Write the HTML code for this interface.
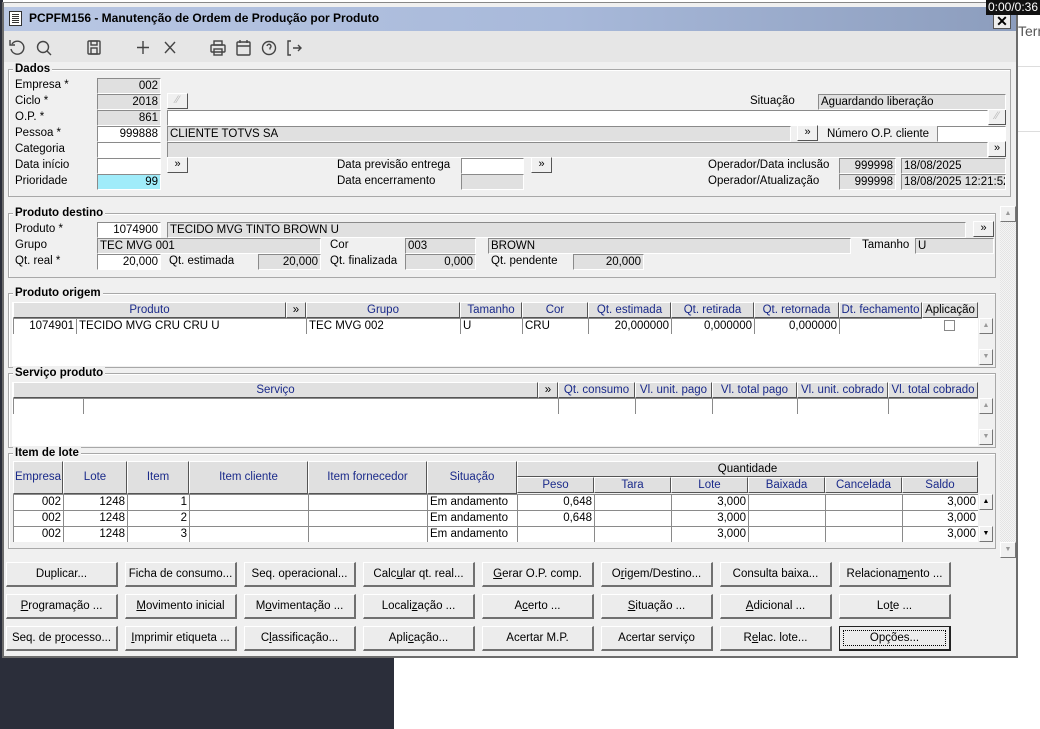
<!DOCTYPE html>
<html><head><meta charset="utf-8"><style>
*{box-sizing:border-box;margin:0;padding:0}
body{width:1040px;height:729px;position:relative;overflow:hidden;background:#fff;font-family:"Liberation Sans",Arial,sans-serif;font-size:11.5px;color:#000}
div,span{position:absolute}
.l{white-space:nowrap;line-height:14px}
.f{height:16px;line-height:14px;padding:0 2px;white-space:nowrap;overflow:hidden;border-top:1px solid #8a8a8a;border-left:1px solid #8a8a8a;border-bottom:1px solid #fff;border-right:1px solid #fff}
.w{background:#fff}.g{background:#e0e0e0}.r{text-align:right}
.b{height:16px;background:#f0f0f0;border:1px solid #fff;border-right-color:#555;border-bottom-color:#555;text-align:center;line-height:13px;font-size:11px}
.fs{border:1px solid #a8a8a8;box-shadow:inset 1px 1px 0 #fff}
.lg{font-weight:bold;background:#f0f0f0;padding:0 2px;line-height:14px}
.h{height:16px;background:#e0e0e0;border:1px solid #fff;border-right-color:#555;border-bottom-color:#555;text-align:center;color:#1a2a8a;line-height:14px;white-space:nowrap;overflow:hidden}
.c{height:16px;background:#fff;border-left:1px solid #8a8a8a;border-top:1px solid #8a8a8a;line-height:14px;padding:0 2px;white-space:nowrap;overflow:hidden}
.bt{height:25px;width:112px;background:#ececec;border:1px solid #fff;border-right:2px solid #707070;border-bottom:2px solid #707070;text-align:center;line-height:22px;white-space:nowrap}
.sb{width:14px;height:16px;background:#f0f0f0;border:1px solid #fff;border-right-color:#777;border-bottom-color:#777;font-size:7px;text-align:center;line-height:13px;color:#999}
</style></head><body>
<div style="left:0;top:0;width:3px;height:729px;background:#2b2e3a"></div>
<div style="left:0;top:657px;width:394px;height:72px;background:#2b2e3a"></div>
<div class="l" style="left:1018px;top:24px;font-size:14px;color:#555">Terr</div>
<div style="left:1017px;top:66px;width:23px;height:1px;background:#ddd"></div>
<div style="left:1017px;top:131px;width:23px;height:1px;background:#ddd"></div>
<div style="left:2px;top:2px;width:1016px;height:656px;background:#f0f0f0;border:2px solid #6c6c6c;border-top:1px solid #888"></div>
<div style="left:4px;top:7px;width:1012px;height:24px;background:linear-gradient(90deg,#b9c7e3,#a8b9da 55%,#8c9dbd)"></div>
<div style="left:9px;top:11px;width:13px;height:15px;background:#fff;border:1px solid #333"><div style="left:2px;top:2px;width:7px;height:9px;background:repeating-linear-gradient(#333 0 1px,#fff 1px 2px)"></div></div>
<div class="l" style="left:29px;top:11px;font-weight:bold;font-size:12px">PCPFM156 - Manutenção de Ordem de Produção por Produto</div>
<div style="left:993px;top:14px;width:18px;height:15px;background:#eee;border:1px solid #555;text-align:center;font-weight:bold;line-height:13px;font-size:14px">✕</div>
<div class="l" style="left:986px;top:0;width:54px;height:15px;background:#111;color:#fff;font-size:12px;text-align:center">0:00/0:36</div>
<div style="left:4px;top:31px;width:1012px;height:31px;background:#e6e6e6"></div>
<svg style="position:absolute;left:8px;top:38px" width="300" height="20" fill="none" stroke="#444" stroke-width="1.4">
<path d="M4 6 A6.5 6.5 0 1 1 3 11"/><path d="M2 2 V7 H7"/>
<circle cx="35" cy="9" r="5.5"/><path d="M39 13 L43 17"/>
<rect x="80" y="3" width="12" height="13" rx="1"/><rect x="83" y="3" width="6" height="4"/><rect x="83" y="10" width="6" height="6"/>
<path d="M135 3 V16 M129 9.5 H141"/><path d="M157 4 L167 15 M167 4 L157 15"/>
<rect x="203" y="7" width="14" height="7" rx="1"/><rect x="206" y="3" width="8" height="4"/><rect x="206" y="11" width="8" height="6"/>
<rect x="229" y="4" width="13" height="13" rx="1"/><path d="M229 8 H242 M232 2 V5 M239 2 V5"/>
<circle cx="261" cy="10" r="6.5"/><path d="M259 8 a2 2 0 1 1 3 2 v1.5"/>
<path d="M283 3 H280 V17 H283 M285 10 H293 M290 7 L293 10 L290 13"/>
</svg>
<!-- Dados -->
<div class="fs" style="left:8px;top:69px;width:1003px;height:128px"></div>
<div class="lg" style="left:13px;top:62px">Dados</div>
<div class="l" style="left:15px;top:78px">Empresa *</div>
<div class="l" style="left:15px;top:94px">Ciclo *</div>
<div class="l" style="left:15px;top:110px">O.P. *</div>
<div class="l" style="left:15px;top:126px">Pessoa *</div>
<div class="l" style="left:15px;top:142px">Categoria</div>
<div class="l" style="left:15px;top:158px">Data início</div>
<div class="l" style="left:15px;top:174px">Prioridade</div>
<div class="f g r" style="left:97px;top:78px;width:64px">002</div>
<div class="f g r" style="left:97px;top:94px;width:64px">2018</div>
<div class="f g r" style="left:97px;top:110px;width:64px">861</div>
<div class="f w r" style="left:97px;top:126px;width:64px">999888</div>
<div class="f w" style="left:97px;top:142px;width:64px"></div>
<div class="f w" style="left:97px;top:158px;width:64px"></div>
<div class="f r" style="left:97px;top:174px;width:64px;background:#a0ecfa">99</div>
<div class="b" style="left:167px;top:93px;width:21px;color:#bbb">⁄⁄</div>
<div class="f w" style="left:167px;top:110px;width:821px"></div>
<div class="b" style="left:988px;top:109px;width:18px;color:#bbb">⁄⁄</div>
<div class="f g" style="left:167px;top:126px;width:624px">CLIENTE TOTVS SA</div>
<div class="b" style="left:797px;top:125px;width:21px">»</div>
<div class="l" style="left:827px;top:127px">Número O.P. cliente</div>
<div class="f w" style="left:937px;top:126px;width:69px"></div>
<div class="f g" style="left:167px;top:142px;width:821px"></div>
<div class="b" style="left:988px;top:141px;width:18px">»</div>
<div class="b" style="left:167px;top:157px;width:21px">»</div>
<div class="l" style="left:337px;top:158px">Data previsão entrega</div>
<div class="l" style="left:337px;top:174px">Data encerramento</div>
<div class="f w" style="left:461px;top:158px;width:63px"></div>
<div class="f g" style="left:461px;top:174px;width:63px"></div>
<div class="b" style="left:531px;top:157px;width:21px">»</div>
<div class="l" style="left:750px;top:94px">Situação</div>
<div class="f g" style="left:818px;top:94px;width:188px">Aguardando liberação</div>
<div class="l" style="left:708px;top:158px">Operador/Data inclusão</div>
<div class="l" style="left:708px;top:174px">Operador/Atualização</div>
<div class="f g r" style="left:839px;top:158px;width:57px">999998</div>
<div class="f g r" style="left:839px;top:174px;width:57px">999998</div>
<div class="f g" style="left:901px;top:158px;width:105px">18/08/2025</div>
<div class="f g" style="left:901px;top:174px;width:105px">18/08/2025 12:21:52</div>
<!-- scrollbar -->
<div style="left:1000px;top:206px;width:16px;height:352px;background:repeating-conic-gradient(#f4f4f4 0 25%,#e4e4e4 0 50%) 0 0/2px 2px"></div>
<div class="sb" style="left:1000px;top:206px;width:16px">▲</div>
<div class="sb" style="left:1000px;top:542px;width:16px">▼</div>
<!-- Produto destino -->
<div class="fs" style="left:8px;top:213px;width:988px;height:65px"></div>
<div class="lg" style="left:13px;top:206px">Produto destino</div>
<div class="l" style="left:15px;top:222px">Produto *</div>
<div class="l" style="left:15px;top:238px">Grupo</div>
<div class="l" style="left:15px;top:254px">Qt. real *</div>
<div class="f w r" style="left:97px;top:222px;width:64px">1074900</div>
<div class="f g" style="left:167px;top:222px;width:799px">TECIDO MVG TINTO BROWN U</div>
<div class="b" style="left:973px;top:221px;width:21px">»</div>
<div class="f g" style="left:97px;top:238px;width:224px">TEC MVG 001</div>
<div class="l" style="left:330px;top:238px">Cor</div>
<div class="f g" style="left:405px;top:238px;width:71px">003</div>
<div class="f g" style="left:488px;top:238px;width:363px">BROWN</div>
<div class="l" style="left:862px;top:238px">Tamanho</div>
<div class="f g" style="left:915px;top:238px;width:79px">U</div>
<div class="f w r" style="left:97px;top:254px;width:64px">20,000</div>
<div class="l" style="left:169px;top:254px">Qt. estimada</div>
<div class="f g r" style="left:258px;top:254px;width:63px">20,000</div>
<div class="l" style="left:330px;top:254px">Qt. finalizada</div>
<div class="f g r" style="left:405px;top:254px;width:71px">0,000</div>
<div class="l" style="left:491px;top:254px">Qt. pendente</div>
<div class="f g r" style="left:573px;top:254px;width:71px">20,000</div>
<!-- Produto origem -->
<div class="fs" style="left:8px;top:293px;width:988px;height:75px"></div>
<div style="left:12px;top:302px;width:966px;height:64px;background:#fff"></div>
<div class="lg" style="left:13px;top:286px">Produto origem</div>
<div class="h" style="left:13px;top:302px;width:273px">Produto</div>
<div class="h" style="left:286px;top:302px;width:20px;color:#000">»</div>
<div class="h" style="left:306px;top:302px;width:154px">Grupo</div>
<div class="h" style="left:460px;top:302px;width:62px">Tamanho</div>
<div class="h" style="left:522px;top:302px;width:66px">Cor</div>
<div class="h" style="left:588px;top:302px;width:83px">Qt. estimada</div>
<div class="h" style="left:671px;top:302px;width:83px">Qt. retirada</div>
<div class="h" style="left:754px;top:302px;width:85px">Qt. retornada</div>
<div class="h" style="left:839px;top:302px;width:83px">Dt. fechamento</div>
<div class="h" style="left:922px;top:302px;width:56px;color:#000">Aplicação</div>
<div class="c r" style="left:13px;top:318px;width:63px">1074901</div>
<div class="c" style="left:76px;top:318px;width:230px">TECIDO MVG CRU CRU U</div>
<div class="c" style="left:306px;top:318px;width:154px">TEC MVG 002</div>
<div class="c" style="left:460px;top:318px;width:62px">U</div>
<div class="c" style="left:522px;top:318px;width:66px">CRU</div>
<div class="c r" style="left:588px;top:318px;width:83px">20,000000</div>
<div class="c r" style="left:671px;top:318px;width:83px">0,000000</div>
<div class="c r" style="left:754px;top:318px;width:85px">0,000000</div>
<div class="c" style="left:839px;top:318px;width:83px"></div>
<div style="left:944px;top:320px;width:11px;height:11px;border:1px solid #888;background:#fff"></div>
<div class="sb" style="left:979px;top:318px">▲</div>
<div class="sb" style="left:979px;top:349px">▼</div>
<!-- Serviço -->
<div class="fs" style="left:8px;top:373px;width:988px;height:75px"></div>
<div style="left:12px;top:382px;width:966px;height:64px;background:#fff"></div>
<div class="lg" style="left:13px;top:366px">Serviço produto</div>
<div class="h" style="left:13px;top:382px;width:525px">Serviço</div>
<div class="h" style="left:538px;top:382px;width:20px;color:#000">»</div>
<div class="h" style="left:558px;top:382px;width:77px">Qt. consumo</div>
<div class="h" style="left:635px;top:382px;width:77px">Vl. unit. pago</div>
<div class="h" style="left:712px;top:382px;width:85px">Vl. total pago</div>
<div class="h" style="left:797px;top:382px;width:91px">Vl. unit. cobrado</div>
<div class="h" style="left:888px;top:382px;width:90px">Vl. total cobrado</div>
<div class="c" style="left:13px;top:398px;width:70px"></div>
<div class="c" style="left:83px;top:398px;width:475px"></div>
<div class="c" style="left:558px;top:398px;width:77px"></div>
<div class="c" style="left:635px;top:398px;width:77px"></div>
<div class="c" style="left:712px;top:398px;width:85px"></div>
<div class="c" style="left:797px;top:398px;width:91px"></div>
<div class="c" style="left:888px;top:398px;width:90px"></div>
<div class="sb" style="left:979px;top:398px">▲</div>
<div class="sb" style="left:979px;top:429px">▼</div>
<!-- Item de lote -->
<div class="fs" style="left:8px;top:453px;width:988px;height:96px"></div>
<div class="lg" style="left:13px;top:446px">Item de lote</div>
<div class="h" style="left:13px;top:461px;width:50px;height:33px;line-height:30px;color:#1a2a8a">Empresa</div>
<div class="h" style="left:63px;top:461px;width:64px;height:33px;line-height:30px">Lote</div>
<div class="h" style="left:127px;top:461px;width:62px;height:33px;line-height:30px">Item</div>
<div class="h" style="left:189px;top:461px;width:119px;height:33px;line-height:30px">Item cliente</div>
<div class="h" style="left:308px;top:461px;width:119px;height:33px;line-height:30px">Item fornecedor</div>
<div class="h" style="left:427px;top:461px;width:90px;height:33px;line-height:30px">Situação</div>
<div class="h" style="left:517px;top:461px;width:461px;color:#000">Quantidade</div>
<div class="h" style="left:517px;top:477px;width:77px">Peso</div>
<div class="h" style="left:594px;top:477px;width:77px">Tara</div>
<div class="h" style="left:671px;top:477px;width:77px">Lote</div>
<div class="h" style="left:748px;top:477px;width:77px">Baixada</div>
<div class="h" style="left:825px;top:477px;width:77px">Cancelada</div>
<div class="h" style="left:902px;top:477px;width:76px">Saldo</div>

<div class="c r" style="left:13px;top:494px;width:50px">002</div><div class="c r" style="left:63px;top:494px;width:64px">1248</div><div class="c r" style="left:127px;top:494px;width:62px">1</div><div class="c" style="left:189px;top:494px;width:119px"></div><div class="c" style="left:308px;top:494px;width:119px"></div><div class="c" style="left:427px;top:494px;width:90px">Em andamento</div><div class="c r" style="left:517px;top:494px;width:77px">0,648</div><div class="c" style="left:594px;top:494px;width:77px"></div><div class="c r" style="left:671px;top:494px;width:77px">3,000</div><div class="c" style="left:748px;top:494px;width:77px"></div><div class="c" style="left:825px;top:494px;width:77px"></div><div class="c r" style="left:902px;top:494px;width:76px">3,000</div>
<div class="c r" style="left:13px;top:510px;width:50px">002</div><div class="c r" style="left:63px;top:510px;width:64px">1248</div><div class="c r" style="left:127px;top:510px;width:62px">2</div><div class="c" style="left:189px;top:510px;width:119px"></div><div class="c" style="left:308px;top:510px;width:119px"></div><div class="c" style="left:427px;top:510px;width:90px">Em andamento</div><div class="c r" style="left:517px;top:510px;width:77px">0,648</div><div class="c" style="left:594px;top:510px;width:77px"></div><div class="c r" style="left:671px;top:510px;width:77px">3,000</div><div class="c" style="left:748px;top:510px;width:77px"></div><div class="c" style="left:825px;top:510px;width:77px"></div><div class="c r" style="left:902px;top:510px;width:76px">3,000</div>
<div class="c r" style="left:13px;top:526px;width:50px">002</div><div class="c r" style="left:63px;top:526px;width:64px">1248</div><div class="c r" style="left:127px;top:526px;width:62px">3</div><div class="c" style="left:189px;top:526px;width:119px"></div><div class="c" style="left:308px;top:526px;width:119px"></div><div class="c" style="left:427px;top:526px;width:90px">Em andamento</div><div class="c r" style="left:517px;top:526px;width:77px"></div><div class="c" style="left:594px;top:526px;width:77px"></div><div class="c r" style="left:671px;top:526px;width:77px">3,000</div><div class="c" style="left:748px;top:526px;width:77px"></div><div class="c" style="left:825px;top:526px;width:77px"></div><div class="c r" style="left:902px;top:526px;width:76px">3,000</div>
<div class="sb" style="left:979px;top:494px;color:#000">▲</div>
<div class="sb" style="left:979px;top:526px;color:#000">▼</div>
<!-- buttons -->
<div class="bt" style="left:6px;top:562px">Duplicar...</div>
<div class="bt" style="left:125px;top:562px">Ficha de consumo...</div>
<div class="bt" style="left:244px;top:562px">Seq. operacional...</div>
<div class="bt" style="left:363px;top:562px">Calc<u>u</u>lar qt. real...</div>
<div class="bt" style="left:482px;top:562px"><u>G</u>erar O.P. comp.</div>
<div class="bt" style="left:601px;top:562px">O<u>r</u>igem/Destino...</div>
<div class="bt" style="left:720px;top:562px">Consulta baixa...</div>
<div class="bt" style="left:839px;top:562px">Relaciona<u>m</u>ento ...</div>
<div class="bt" style="left:6px;top:594px"><u>P</u>rogramação ...</div>
<div class="bt" style="left:125px;top:594px"><u>M</u>ovimento inicial</div>
<div class="bt" style="left:244px;top:594px">M<u>o</u>vimentação ...</div>
<div class="bt" style="left:363px;top:594px">Locali<u>z</u>ação ...</div>
<div class="bt" style="left:482px;top:594px">A<u>c</u>erto ...</div>
<div class="bt" style="left:601px;top:594px"><u>S</u>ituação ...</div>
<div class="bt" style="left:720px;top:594px"><u>A</u>dicional ...</div>
<div class="bt" style="left:839px;top:594px">Lo<u>t</u>e ...</div>
<div class="bt" style="left:6px;top:626px">Seq. de p<u>r</u>ocesso...</div>
<div class="bt" style="left:125px;top:626px"><u>I</u>mprimir etiqueta ...</div>
<div class="bt" style="left:244px;top:626px">C<u>l</u>assificação...</div>
<div class="bt" style="left:363px;top:626px">Apli<u>c</u>ação...</div>
<div class="bt" style="left:482px;top:626px">Acertar M.P.</div>
<div class="bt" style="left:601px;top:626px">Acertar serviço</div>
<div class="bt" style="left:720px;top:626px">R<u>e</u>lac. lote...</div>
<div class="bt" style="left:839px;top:626px;border:1px solid #222;border-right:2px solid #222;border-bottom:2px solid #222"><span style="left:3px;top:3px;right:3px;bottom:3px;border:1px dotted #000;line-height:15px">Opções...</span></div>
</body></html>
